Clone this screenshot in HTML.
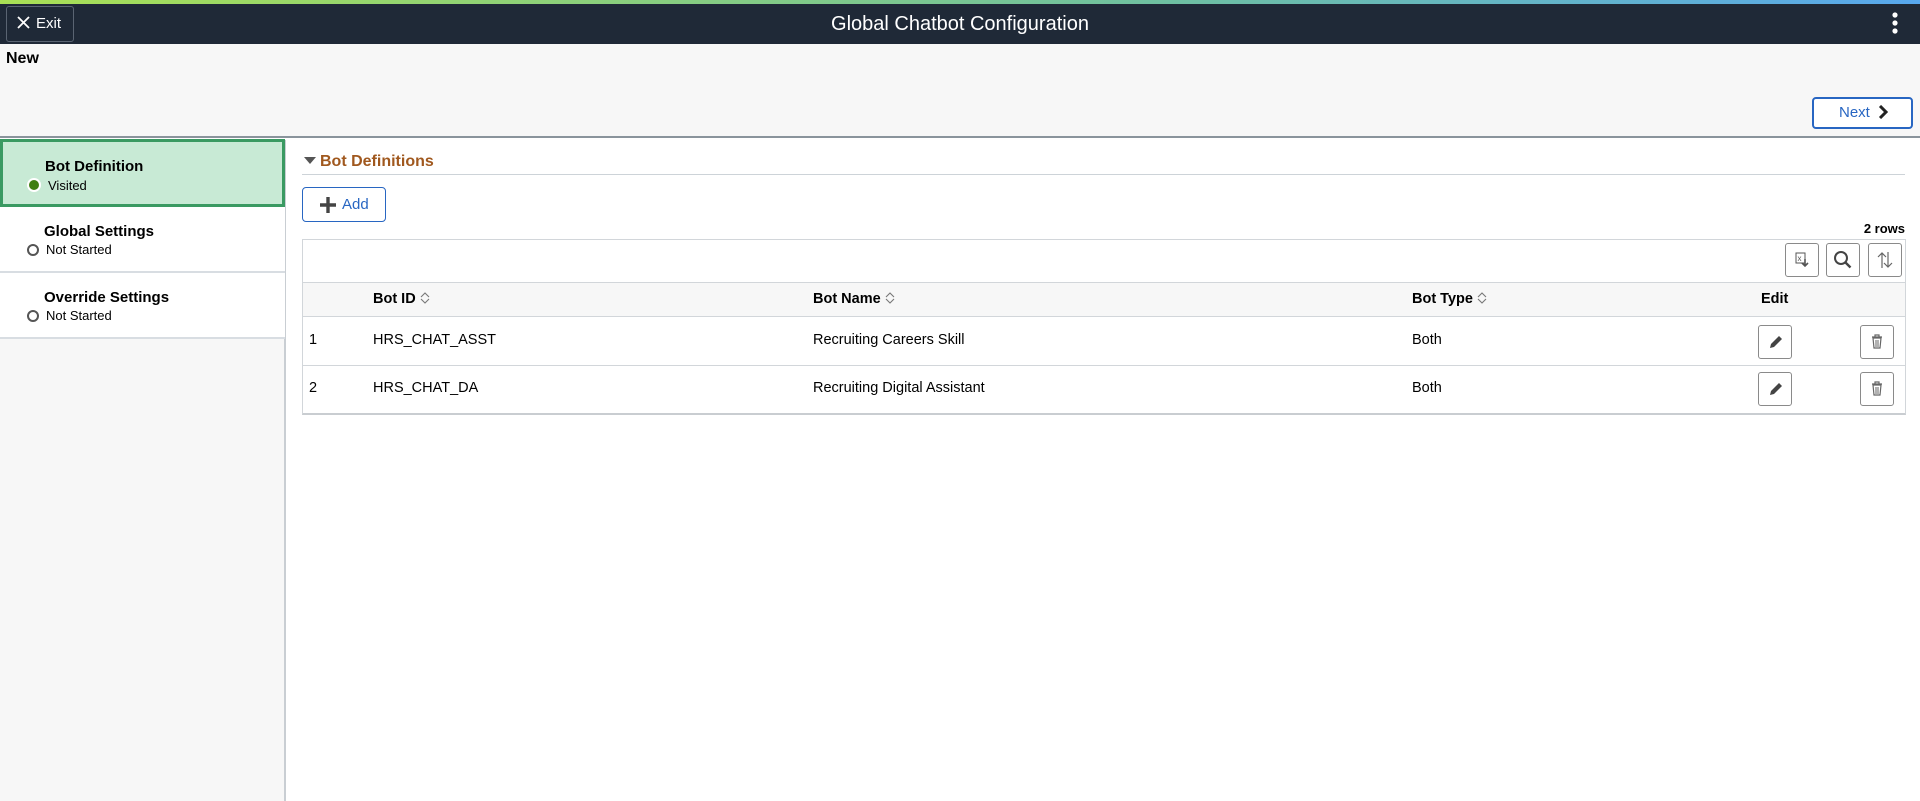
<!DOCTYPE html>
<html><head><meta charset="utf-8"><style>
*{box-sizing:border-box;margin:0;padding:0}
body{width:1920px;height:801px;overflow:hidden;background:#fff;font-family:"Liberation Sans",Arial,sans-serif;color:#000;position:relative}
.a{position:absolute}
.grad{left:0;top:0;width:1920px;height:4px;background:linear-gradient(90deg,#a9e055,#6fc0a0 60%,#58a8ee)}
.hdr{left:0;top:4px;width:1920px;height:40px;background:#1f2937}
.exit{left:6px;top:6px;width:68px;height:36px;border:1px solid #5a6472;border-radius:3px;color:#fff;font-size:15px;line-height:34px;padding-left:10px}
.title{left:0;top:4px;width:1920px;text-align:center;color:#fff;font-size:20px;line-height:40px}
.top{left:0;top:44px;width:1920px;height:94px;background:#f7f7f7;border-bottom:2px solid #8a949c}
.next{left:1812px;top:97px;width:101px;height:32px;border:2px solid #2866c2;border-radius:4px;background:#fff;color:#2866c2;font-size:15px;line-height:28px;padding-left:25px}
.side{left:0;top:140px;width:286px;height:661px;background:#f7f7f7;border-right:2px solid #c9ced3}
.item{left:0;width:285px;background:#fff;border-bottom:2px solid #d8dde2}
.item b{position:absolute;left:44px;font-size:15px}
.item span{position:absolute;left:46px;font-size:13px}
.dot{position:absolute;left:27px;width:12px;height:12px;border-radius:50%;border:2px solid #555}
.btn{position:absolute;width:34px;height:34px;border:1px solid #8a8a8a;border-radius:3px;background:#fff}
.hd{top:283px;font-size:14.5px;font-weight:bold}
.c{font-size:14.5px}
.s{display:inline-block;vertical-align:-2px;margin-left:3px}
</style></head><body>
<div class="a grad"></div>
<div class="a hdr"></div>
<div class="a exit"><svg width="13" height="13" style="margin-right:6px;vertical-align:-1px"><path d="M1 1l11 11M12 1L1 12" stroke="#fff" stroke-width="1.8"/></svg>Exit</div>
<div class="a title">Global Chatbot Configuration</div>
<svg class="a" style="left:1890px;top:12px" width="10" height="24"><circle cx="5" cy="3" r="2.6" fill="#fff"/><circle cx="5" cy="11" r="2.6" fill="#fff"/><circle cx="5" cy="19" r="2.6" fill="#fff"/></svg>
<div class="a top"></div>
<div class="a" style="left:6px;top:50px;font-size:16px;font-weight:bold">New</div>
<div class="a next">Next <svg width="10" height="14" style="vertical-align:-2px;margin-left:4px"><path d="M2 1l6 6-6 6" stroke="#222" stroke-width="3" fill="none"/></svg></div>
<div class="a side"></div>
<div class="a item" style="top:139px;height:68px;background:#c8ead5;border:3px solid #3a9a62"><b style="top:16px;left:42px">Bot Definition</b><div class="dot" style="left:24px;top:36px;background:#3f7e12;border-color:#fff;width:14px;height:14px"></div><span style="top:36px;left:45px">Visited</span></div>
<div class="a item" style="top:207px;height:66px"><b style="top:16px">Global Settings</b><div class="dot" style="top:37px"></div><span style="top:35px">Not Started</span></div>
<div class="a item" style="top:273px;height:66px"><b style="top:16px">Override Settings</b><div class="dot" style="top:37px"></div><span style="top:35px">Not Started</span></div>

<svg class="a" style="left:304px;top:157px" width="12" height="8"><path d="M0 0h12L6 7z" fill="#555"/></svg>
<div class="a" style="left:320px;top:153px;font-size:16px;font-weight:bold;color:#a0581e">Bot Definitions</div>
<div class="a" style="left:302px;top:174px;width:1603px;height:1px;background:#cdd3d8"></div>
<div class="a" style="left:302px;top:187px;width:84px;height:35px;border:1px solid #2866c2;border-radius:4px;color:#2866c2;font-size:15px;line-height:33px;padding-left:39px">Add</div>
<svg class="a" style="left:320px;top:197px" width="16" height="16"><path d="M8 0v16M0 8h16" stroke="#444" stroke-width="3.4"/></svg>
<div class="a" style="left:1800px;top:221px;width:105px;text-align:right;font-size:13px;font-weight:bold">2 rows</div>
<div class="a" style="left:302px;top:239px;width:1604px;height:176px;border:1px solid #d2d6da;border-bottom:2px solid #c9cdd1"></div>
<div class="a" style="left:303px;top:282px;width:1602px;height:35px;background:#f7f7f7;border-top:1px solid #d2d6da;border-bottom:1px solid #d2d6da"></div>
<div class="a" style="left:303px;top:365px;width:1602px;height:1px;background:#d2d6da"></div>
<div class="btn" style="left:1785px;top:243px"><svg width="32" height="32"><rect x="10" y="9" width="9" height="10" fill="none" stroke="#555"/><text x="11.5" y="17" font-size="8" fill="#555" font-family="Liberation Sans">x</text><path d="M19 15v7M16 19l3 3 3-3" stroke="#555" stroke-width="1.6" fill="none"/></svg></div>
<div class="btn" style="left:1826px;top:243px"><svg width="32" height="32"><circle cx="14" cy="14" r="6" fill="none" stroke="#444" stroke-width="2"/><path d="M18.5 18.5l5 5" stroke="#444" stroke-width="2.4"/></svg></div>
<div class="btn" style="left:1868px;top:243px"><svg width="32" height="32"><path d="M13 24V9M9 13l4-4 4 4M19 8v15M15 19l4 4 4-4" stroke="#666" stroke-width="1.2" fill="none"/></svg></div>
<div class="a hd" style="left:373px;top:291px">Bot ID<svg class="s" width="12" height="14"><path d="M2 6l4-4 4 4M2 8l4 4 4-4" stroke="#777" stroke-width="1.1" fill="none"/></svg></div>
<div class="a hd" style="left:813px;top:291px">Bot Name<svg class="s" width="12" height="14"><path d="M2 6l4-4 4 4M2 8l4 4 4-4" stroke="#777" stroke-width="1.1" fill="none"/></svg></div>
<div class="a hd" style="left:1412px;top:291px">Bot Type<svg class="s" width="12" height="14"><path d="M2 6l4-4 4 4M2 8l4 4 4-4" stroke="#777" stroke-width="1.1" fill="none"/></svg></div>
<div class="a hd" style="left:1761px;top:291px">Edit</div>
<div class="a c" style="left:309px;top:332px">1</div>
<div class="a c" style="left:373px;top:332px">HRS_CHAT_ASST</div>
<div class="a c" style="left:813px;top:332px">Recruiting Careers Skill</div>
<div class="a c" style="left:1412px;top:332px">Both</div>
<div class="a c" style="left:309px;top:380px">2</div>
<div class="a c" style="left:373px;top:380px">HRS_CHAT_DA</div>
<div class="a c" style="left:813px;top:380px">Recruiting Digital Assistant</div>
<div class="a c" style="left:1412px;top:380px">Both</div>
<div class="btn" style="left:1758px;top:325px"><svg width="32" height="32"><path d="M11 22l1-4 8-8 3 3-8 8z" fill="#444"/></svg></div>
<div class="btn" style="left:1860px;top:325px"><svg width="32" height="32"><path d="M11 11h10M14 11v-2h4v2M12 12h8l-1 10h-6z" stroke="#666" stroke-width="1.2" fill="none"/><path d="M15 14v7M17 14v7" stroke="#666"/></svg></div>
<div class="btn" style="left:1758px;top:372px"><svg width="32" height="32"><path d="M11 22l1-4 8-8 3 3-8 8z" fill="#444"/></svg></div>
<div class="btn" style="left:1860px;top:372px"><svg width="32" height="32"><path d="M11 11h10M14 11v-2h4v2M12 12h8l-1 10h-6z" stroke="#666" stroke-width="1.2" fill="none"/><path d="M15 14v7M17 14v7" stroke="#666"/></svg></div>
</body></html>
